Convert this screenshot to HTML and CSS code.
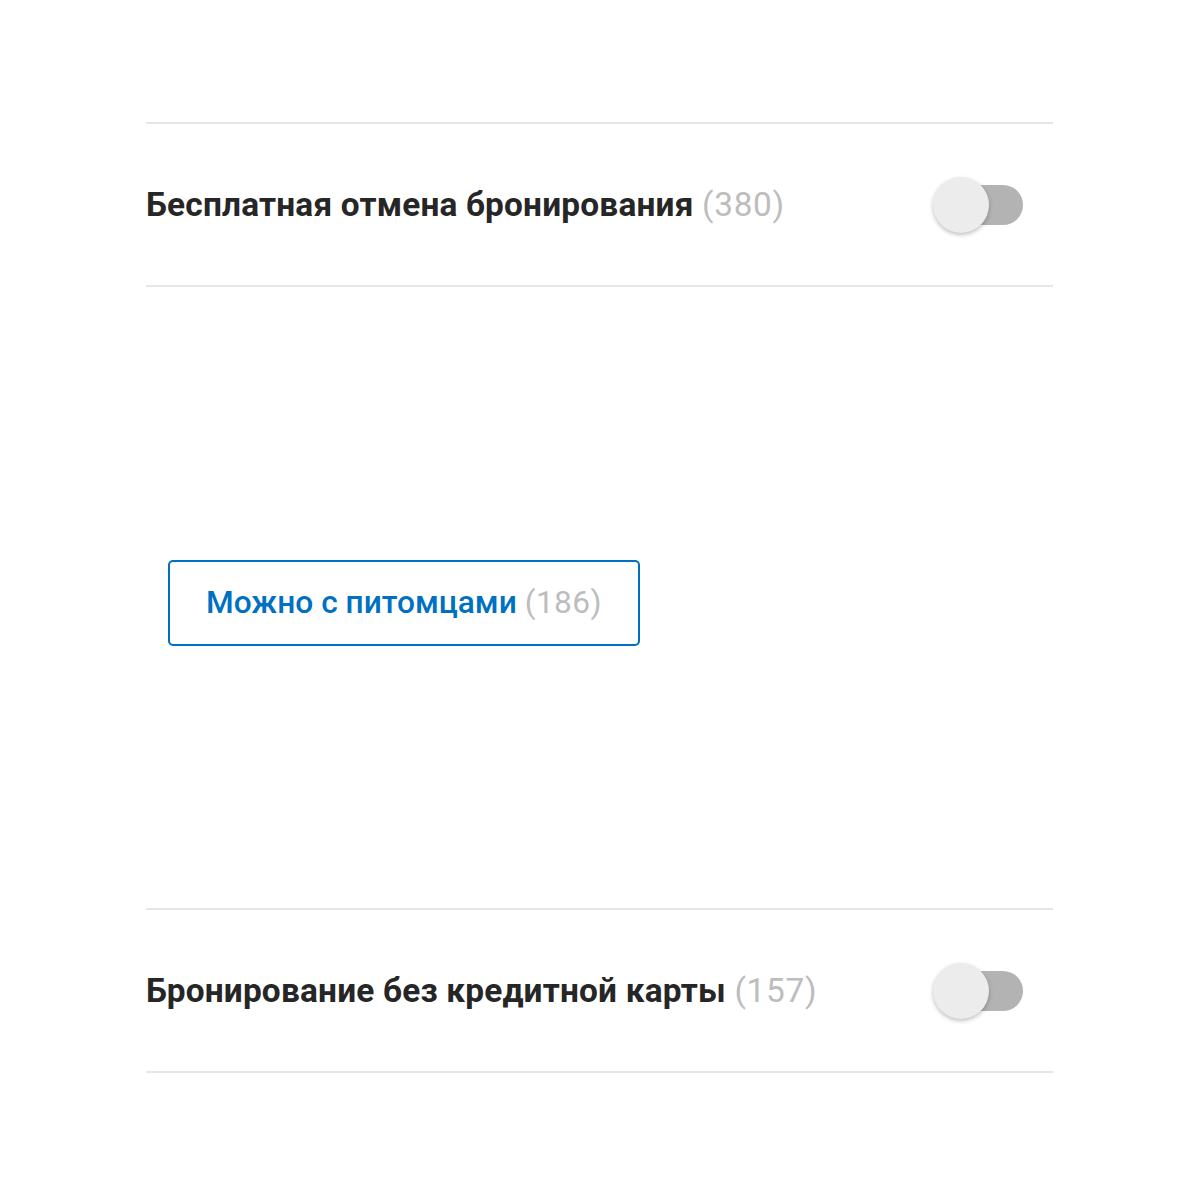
FILE: index.html
```html
<!DOCTYPE html>
<html lang="ru">
<head>
<meta charset="utf-8">
<link rel="stylesheet" href="styles.css">
</head>
<body>
<div class="panel">
  <div class="row">
    <span class="label">Бесплатная отмена бронирования <span class="count">(380)</span></span>
    <span class="toggle"><span class="knob"></span></span>
  </div>
  <div class="middle">
    <button class="chip">Можно с питомцами <span class="count">(186)</span></button>
  </div>
  <div class="row">
    <span class="label">Бронирование без кредитной карты <span class="count">(157)</span></span>
    <span class="toggle"><span class="knob"></span></span>
  </div>
</div>
</body>
</html>
```
FILE: styles.css
```css
html, body {
  margin: 0;
  background: #fff;
}
body {
  font-family: Roboto, "Noto Sans", sans-serif;
}
.panel {
  width: 907px;
  margin: 0 0 0 146px;
  padding-top: 122px;
}
.row {
  display: flex;
  align-items: center;
  justify-content: space-between;
  height: 161px;
  border-top: 2px solid #e6e6e6;
  border-bottom: 2px solid #e6e6e6;
  box-sizing: content-box;
}
.label {
  font-size: 33.4px;
  font-weight: 700;
  color: #262626;
  letter-spacing: 0.2px;
}
.count {
  font-weight: 400;
  color: #bdbdbd;
  letter-spacing: 0.7px;
}
.toggle {
  position: relative;
  width: 82px;
  height: 40px;
  border-radius: 20px;
  background: #b3b3b3;
  margin-right: 30px;
}
.knob {
  position: absolute;
  left: -8px;
  top: -8px;
  width: 56px;
  height: 56px;
  border-radius: 50%;
  background: #ececec;
  box-shadow: 0 2px 4px rgba(0,0,0,0.25);
}
.middle {
  height: 621px;
  display: flex;
  align-items: center;
  padding-left: 22px;
  padding-top: 10px;
  box-sizing: border-box;
}
.chip {
  font-family: inherit;
  height: 86px;
  padding: 0 36px;
  border: 2px solid #0071c2;
  border-radius: 5px;
  background: #fff;
  color: #0071c2;
  font-size: 31.7px;
  font-weight: 500;
}
.chip .count {
  color: #bdbdbd;
  letter-spacing: 0.4px;
}
```
